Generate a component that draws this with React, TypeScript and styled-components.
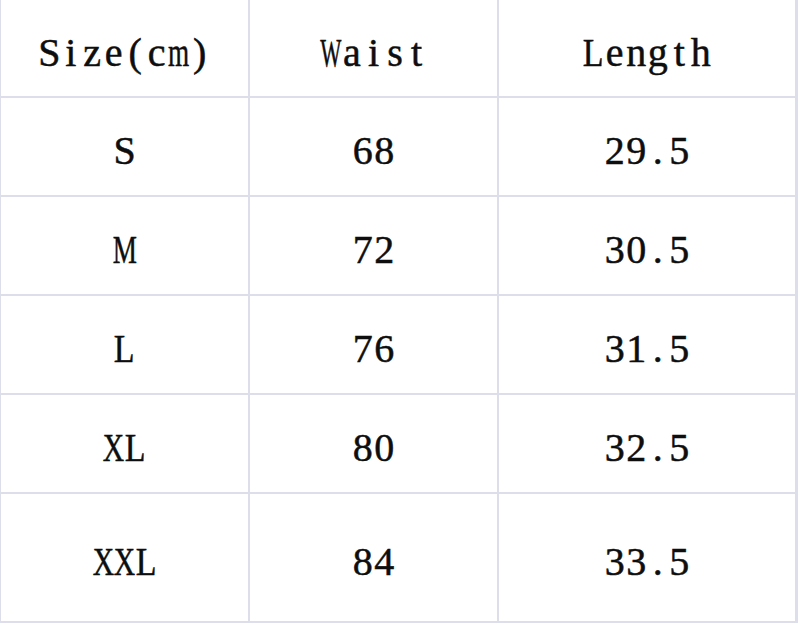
import React from "react";
import styled, { createGlobalStyle } from "styled-components";

const Global = createGlobalStyle`
  html, body { margin: 0; padding: 0; background: #ffffff; }
  body { width: 800px; height: 624px; overflow: hidden; }
`;

const Page = styled.div`
  width: 800px;
  height: 624px;
  background: #ffffff;
`;

const Table = styled.div`
  display: grid;
  width: 798px;
  box-sizing: border-box;
  grid-template-columns: 247px 247px 296px;
  grid-template-rows: 96px 97px 97px 97px 97px 127px;
  gap: 2px;
  padding: 0 2px 2px 1px;
  background: #dcdfea;
`;

const Cell = styled.div<{ $shift: number }>`
  background: #ffffff;
  display: flex;
  align-items: center;
  justify-content: center;
  padding-top: ${(p) => p.$shift}px;
  box-sizing: border-box;
  font-family: "Liberation Serif", "Times New Roman", serif;
  font-size: 40px;
  line-height: 1;
  color: #0e0e0e;
  -webkit-text-stroke: 0.5px #0e0e0e;
  white-space: nowrap;
`;

const Glyph = styled.span`
  display: inline-flex;
  justify-content: center;
  width: 21.5px;
`;

const Ink = styled.span<{ $sx: number }>`
  display: inline-block;
  flex: none;
  transform: scaleX(${(p) => p.$sx});
`;

const SCALE: Record<string, number> = {
  M: 0.68,
  W: 0.56,
  X: 0.74,
  L: 0.85,
  m: 0.68,
};

function Mono({ text }: { text: string }) {
  return (
    <span>
      {text.split("").map((ch, i) => (
        <Glyph key={i}>
          <Ink $sx={SCALE[ch] ?? 1}>{ch}</Ink>
        </Glyph>
      ))}
    </span>
  );
}

const rows: string[][] = [
  ["Size(cm)", "Waist", "Length"],
  ["S", "68", "29.5"],
  ["M", "72", "30.5"],
  ["L", "76", "31.5"],
  ["XL", "80", "32.5"],
  ["XXL", "84", "33.5"],
];

export default function App() {
  return (
    <Page>
      <Global />
      <Table>
        {rows.map((r, ri) =>
          r.map((c, ci) => (
            <Cell key={`${ri}-${ci}`} $shift={9}>
              <Mono text={c} />
            </Cell>
          ))
        )}
      </Table>
    </Page>
  );
}
